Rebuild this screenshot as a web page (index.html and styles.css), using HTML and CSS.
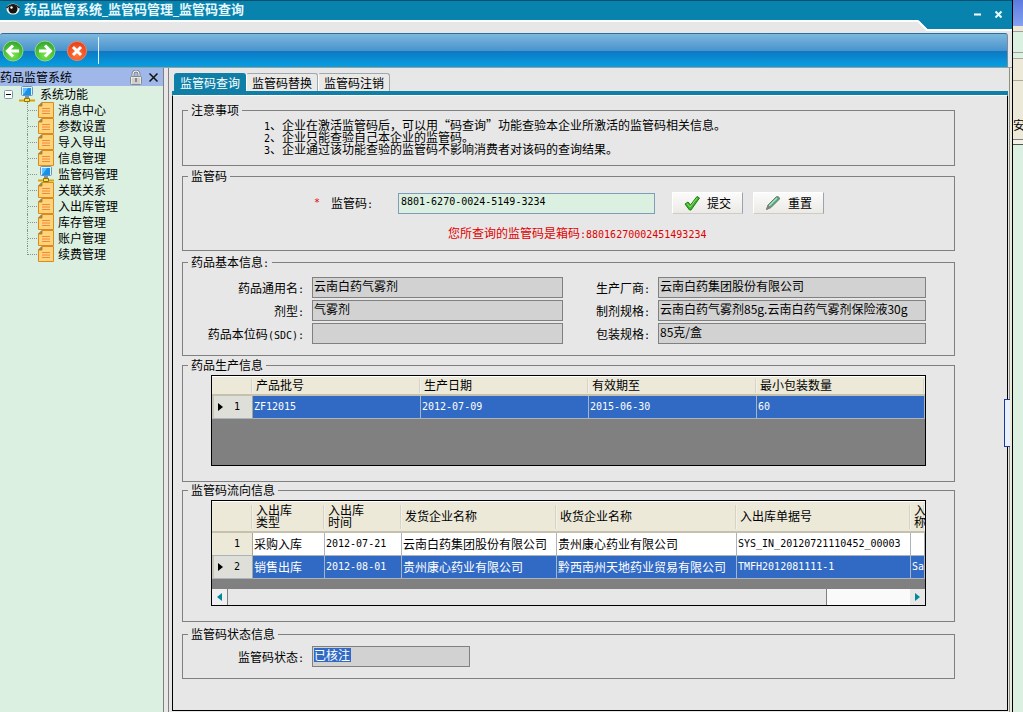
FILE: index.html
```html
<!DOCTYPE html>
<html lang="zh-CN">
<head>
<meta charset="utf-8">
<title>药品监管系统_监管码管理_监管码查询</title>
<link rel="stylesheet" href="styles.css">
</head>
<body>
<svg class="defs" aria-hidden="true">
  <defs>
    <radialGradient id="green" cx="50%" cy="70%" r="65%"><stop offset="0" stop-color="#7be84a"/><stop offset="1" stop-color="#35a632"/></radialGradient>
    <radialGradient id="orange" cx="50%" cy="70%" r="65%"><stop offset="0" stop-color="#ff7a3c"/><stop offset="1" stop-color="#e8401c"/></radialGradient>
  </defs>
  <symbol id="note" viewBox="0 0 16 16">
    <path d="M4 .5H15.500V15.500H.5V4z" fill="#ffd27c" stroke="#dc8a1e"/>
    <path d="M.5 4 4 .5V4z" fill="#9a7a2c" stroke="#b8862c"/>
    <path d="M4 6.500h8M4 9h8M4 11.500h8" stroke="#f08a34"/>
  </symbol>
  <symbol id="pc" viewBox="0 0 16 16">
    <rect x="2.500" y=".5" width="11" height="9" rx="1" fill="#e4f0fa" stroke="#6d93b8"/>
    <rect x="4" y="2" width="8" height="7" fill="#1492ea"/>
    <path d="M4 2h5L5 8H4z" fill="#5cc0ff"/>
    <path d="M6 10h4v3H6z" fill="#8b8f96"/>
    <path d="M0 14.500h16" stroke="#d9a400" stroke-width="2"/>
    <path d="M5.500 12.500h5v3h-5z" fill="#ffe14a" stroke="#8c7412"/>
  </symbol>
</svg>
<div class="window">
  <header class="titlebar">
    <div class="title-left">
      <svg class="eye" viewBox="0 0 14 12" width="14" height="12"><ellipse cx="7" cy="6" rx="6.500" ry="5.500" fill="#f4f4f4"/><circle cx="7" cy="6" r="4.500" fill="#17130f"/><circle cx="5.500" cy="4.500" r="1.200" fill="#fff"/><path d="M.5 5Q7-2 13.500 5" fill="none" stroke="#222" stroke-width="1.500"/></svg>
      <h1>药品监管系统<span class="num">_</span>监管码管理<span class="num">_</span>监管码查询</h1>
    </div>
    <svg class="notch" viewBox="0 0 10 31" width="10" height="31"><path d="M0 0H10V29H9L0 20z" fill="#0883ae"/><path d="M0 .5H10" stroke="#04516f"/><path d="M0 21 9 30H10" fill="none" stroke="#fff" stroke-width="2"/></svg>
    <div class="title-right">
      <button type="button" aria-label="最小化"><svg viewBox="0 0 9 9" width="9" height="9"><path d="M1 4.500h7" stroke="#fff" stroke-width="2"/></svg></button>
      <button type="button" aria-label="关闭"><svg viewBox="0 0 9 9" width="9" height="9"><path d="M1.500 1.500l6 6M7.500 1.500l-6 6" stroke="#e8fbff" stroke-width="2"/></svg></button>
    </div>
  </header>
  <nav class="toolbar">
    <button type="button" aria-label="后退"><svg viewBox="0 0 22 22" width="22" height="22"><circle cx="11" cy="11" r="10" fill="url(#green)" stroke="#8fdc86"/><path d="M17 11H6M11 5.500 5.500 11l5.500 5.500" fill="none" stroke="#fff" stroke-width="3"/></svg></button>
    <button type="button" aria-label="前进"><svg viewBox="0 0 22 22" width="22" height="22"><circle cx="11" cy="11" r="10" fill="url(#green)" stroke="#8fdc86"/><path d="M5 11h11M11 5.500l5.500 5.500-5.500 5.500" fill="none" stroke="#fff" stroke-width="3"/></svg></button>
    <button type="button" aria-label="停止"><svg viewBox="0 0 22 22" width="22" height="22"><circle cx="11" cy="11" r="9.500" fill="url(#orange)" stroke="#f2855e"/><path d="M7 7l8 8M15 7l-8 8" stroke="#fff" stroke-width="3"/></svg></button>
    <span class="sep"></span>
  </nav>
  <div class="body">
    <aside class="sidebar">
      <div class="side-head">
        <h2>药品监管系统</h2>
        <button type="button" aria-label="锁定"><svg viewBox="0 0 12 15" width="12" height="15"><path d="M3 7V4a3 3 0 0 1 6 0v3" fill="none" stroke="#888c94" stroke-width="3"/><path d="M3 7V4a3 3 0 0 1 6 0v3" fill="none" stroke="#f4f4f4"/><rect x=".5" y="6.500" width="11" height="8" rx="1" fill="#e9e9e6" stroke="#85888c"/><path d="M2 9h8M2 11h8M2 13h8" stroke="#b4b4b0"/><path d="M6 8v4" stroke="#444"/></svg></button>
        <button type="button" aria-label="关闭面板"><svg viewBox="0 0 9 9" width="9" height="9"><path d="M.5.5l8 8M8.500.5l-8 8" stroke="#111" stroke-width="1.500"/></svg></button>
      </div>
      <div class="tree">
        <div class="root"><svg viewBox="0 0 9 9" width="9" height="9"><rect x=".5" y=".5" width="8" height="8" rx="1" fill="#fff" stroke="#7e96ac"/><path d="M2 4.500h5" stroke="#000"/></svg><svg class="ico" width="16" height="16"><use href="#pc"/></svg><span>系统功能</span></div>
        <ul>
          <li><svg width="16" height="16"><use href="#note"/></svg>消息中心</li>
          <li><svg width="16" height="16"><use href="#note"/></svg>参数设置</li>
          <li><svg width="16" height="16"><use href="#note"/></svg>导入导出</li>
          <li><svg width="16" height="16"><use href="#note"/></svg>信息管理</li>
          <li><svg width="16" height="16"><use href="#pc"/></svg>监管码管理</li>
          <li><svg width="16" height="16"><use href="#note"/></svg>关联关系</li>
          <li><svg width="16" height="16"><use href="#note"/></svg>入出库管理</li>
          <li><svg width="16" height="16"><use href="#note"/></svg>库存管理</li>
          <li><svg width="16" height="16"><use href="#note"/></svg>账户管理</li>
          <li><svg width="16" height="16"><use href="#note"/></svg>续费管理</li>
        </ul>
      </div>
    </aside>
    <div class="splitter"></div>
    <main class="content">
      <div class="tabs">
        <button type="button" class="tab active">监管码查询</button>
        <button type="button" class="tab">监管码替换</button>
        <button type="button" class="tab">监管码注销</button>
      </div>
      <form class="panel">
        <fieldset class="group notes">
          <legend>注意事项</legend>
          <div class="inner">
            <p><span class="num">1</span>、企业在激活监管码后，可以用“码查询”功能查验本企业所激活的监管码相关信息。</p>
            <p><span class="num">2</span>、企业只能查验自己本企业的监管码。</p>
            <p><span class="num">3</span>、企业通过该功能查验的监管码不影响消费者对该码的查询结果。</p>
          </div>
        </fieldset>
        <fieldset class="group query">
          <legend>监管码</legend>
          <div class="inner">
            <div class="query-row">
              <span class="star num">*</span>
              <label for="code">监管码<span class="num">:</span></label>
              <input id="code" class="code num" type="text" value="8801-6270-0024-5149-3234">
              <button type="button" class="btn"><svg viewBox="0 0 16 16" width="16" height="16"><path d="M1 9l3-2 2.500 3L13 1.500 15.500 3 7 15H5.500z" fill="#3fb52a" stroke="#1f7a17"/><path d="M3 8.500 6 12l7-9" fill="none" stroke="#8ee06a"/></svg>提交</button>
              <button type="button" class="btn"><svg viewBox="0 0 16 16" width="16" height="16"><path d="M1.500 14.500 3 10l8-8q3-1.500 3.500 2l-8.500 8.500z" fill="#52a878" stroke="#6b7a74"/><path d="M4 11l8-8" stroke="#a8e4c0" stroke-width="1.500"/><path d="M1 15l2-5 3 2.500z" fill="#8a7c8c"/></svg>重置</button>
            </div>
            <p class="message">您所查询的监管码是箱码<span class="num">:88016270002451493234</span></p>
          </div>
        </fieldset>
        <fieldset class="group basic">
          <legend>药品基本信息<span class="num">:</span></legend>
          <div class="inner fields">
            <label for="f1">药品通用名<span class="num">:</span></label><input id="f1" type="text" readonly value="云南白药气雾剂">
            <label for="f2">生产厂商<span class="num">:</span></label><input id="f2" type="text" readonly value="云南白药集团股份有限公司">
            <label for="f3">剂型<span class="num">:</span></label><input id="f3" type="text" readonly value="气雾剂">
            <label for="f4">制剂规格<span class="num">:</span></label><input id="f4" type="text" readonly value="云南白药气雾剂85g.云南白药气雾剂保险液30g">
            <label for="f5">药品本位码<span class="num">(SDC):</span></label><input id="f5" type="text" readonly value="">
            <label for="f6">包装规格<span class="num">:</span></label><input id="f6" type="text" readonly value="85克/盒">
          </div>
        </fieldset>
        <fieldset class="group production">
          <legend>药品生产信息</legend>
          <div class="inner">
            <div class="grid">
              <table>
                <colgroup><col class="c-head"><col><col><col><col></colgroup>
                <thead><tr><th></th><th>产品批号</th><th>生产日期</th><th>有效期至</th><th>最小包装数量</th></tr></thead>
                <tbody><tr class="sel"><th><div class="rowhead"><i class="mark"></i><span class="num">1</span></div></th><td class="num">ZF12015</td><td class="num">2012-07-09</td><td class="num">2015-06-30</td><td class="num">60</td></tr></tbody>
              </table>
            </div>
          </div>
        </fieldset>
        <fieldset class="group flow">
          <legend>监管码流向信息</legend>
          <div class="inner">
            <div class="grid">
              <table class="tall">
                <colgroup><col class="c-head"><col class="c-type"><col class="c-time"><col class="c-from"><col class="c-to"><col class="c-no"><col></colgroup>
                <thead><tr><th></th><th>入出库<br>类型</th><th>入出库<br>时间</th><th>发货企业名称</th><th>收货企业名称</th><th>入出库单据号</th><th>入<br>称</th></tr></thead>
                <tbody>
                  <tr><th><div class="rowhead"><i></i><span class="num">1</span></div></th><td>采购入库</td><td class="num">2012-07-21</td><td>云南白药集团股份有限公司</td><td>贵州康心药业有限公司</td><td class="num">SYS_IN_20120721110452_00003</td><td></td></tr>
                  <tr class="sel"><th><div class="rowhead"><i class="mark"></i><span class="num">2</span></div></th><td>销售出库</td><td class="num">2012-08-01</td><td>贵州康心药业有限公司</td><td>黔西南州天地药业贸易有限公司</td><td class="num">TMFH2012081111-1</td><td class="num">Sa</td></tr>
                </tbody>
              </table>
              <div class="hscroll">
                <button type="button" aria-label="向左滚动"><svg viewBox="0 0 5 8" width="5" height="8"><path d="M5 0v8L0 4z" fill="#008a96"/></svg></button>
                <span class="thumb"></span><span class="track"></span>
                <button type="button" aria-label="向右滚动"><svg viewBox="0 0 5 8" width="5" height="8"><path d="M0 0v8l5-4z" fill="#008a96"/></svg></button>
              </div>
            </div>
          </div>
        </fieldset>
        <fieldset class="group status">
          <legend>监管码状态信息</legend>
          <div class="inner status-row"><label for="state">监管码状态<span class="num">:</span></label><input id="state" class="picked" type="text" readonly value="已核注"></div>
        </fieldset>
      </form>
    </main>
    <span class="handle"></span>
  </div>
</div>
<div class="behind">
  <span class="b-title"></span><span class="b-gap"></span><span class="b-green"></span><span class="b-menu"></span><span class="b-tool">安</span><span class="b-line"></span><span class="b-rest"></span>
</div>
</body>
</html>
```
FILE: styles.css
```css
* { box-sizing: border-box; }
body {
  margin: 0; min-height: 100vh; display: flex; overflow: hidden;
  background: #e7e7e7; color: #000;
  font: 12px/14px "Noto Sans CJK SC", sans-serif;
}
h1, h2, p, ul { margin: 0; padding: 0; font-size: 12px; font-weight: normal; }
button, input { font: inherit; color: inherit; margin: 0; padding: 0; border: 0; background: none; border-radius: 0; }
button { display: flex; align-items: center; justify-content: center; }
svg { display: block; flex: none; }
.defs { position: absolute; width: 0; height: 0; }
.num { font-family: "DejaVu Sans Mono", "Noto Sans CJK SC", monospace; font-size: 10px; }
p .num, label .num, legend .num, h1 .num { line-height: 0; }

.window { flex: 1; min-width: 0; display: flex; flex-direction: column; border-right: 1px solid #000; }

.titlebar { display: flex; align-items: flex-start; height: 33px; flex: none; }
.title-left { flex: 1; display: flex; align-items: center; gap: 4px; height: 22px; padding: 0 0 3px 6px; background: #0883ae; border-top: 1px solid #04516f; border-bottom: 2px solid #fff; }
.title-left h1 { font-size: 13px; line-height: 16px; font-weight: bold; color: #e6f8ff; }
.title-right { width: 84px; height: 31px; display: flex; justify-content: flex-end; align-items: center; gap: 12px; padding: 0 9px 2px 0; background: #0883ae; border-top: 1px solid #04516f; border-bottom: 2px solid #fff; }

.toolbar { height: 34px; flex: none; margin-right: 4px; display: flex; align-items: center; gap: 10px; padding-left: 2px; border-top: 1px solid #2a6f9f; border-right: 1px solid #7c8c98; border-top-left-radius: 3px; border-top-right-radius: 3px; background: linear-gradient(#7db8de 0, #4a94cd 50%, #0d78c2 51%, #069fe2 100%); }
.sep { width: 1px; height: 27px; background: #e4f4fe; }

.body { flex: 1; min-height: 0; display: flex; position: relative; padding-right: 2px; border-top: 1px solid #a09e96; background: #ece9d8; }
.sidebar { width: 164px; flex: none; display: flex; flex-direction: column; background: #dbf0e0; border-right: 1px solid #808080; }
.side-head { height: 18px; display: flex; align-items: center; padding-right: 5px; background: #9fb8e9; }
.side-head h2 { flex: 1; }
.side-head button + button { margin-left: 7px; }
.root { display: flex; align-items: center; height: 16px; padding-left: 4px; }
.root .ico { margin: 0 5px 0 6px; }
.tree ul { list-style: none; margin-left: 27px; }
.tree li { display: flex; align-items: center; gap: 4px; height: 16px; position: relative; padding-left: 11px; }
.tree li::before { content: ""; position: absolute; left: 0; top: 0; width: 10px; height: 16px; border-left: 1px dotted #88958c; background: linear-gradient(90deg, #88958c 50%, transparent 50%) 0 8px / 2px 1px repeat-x; }
.tree li:last-child::before { height: 9px; }

.splitter { width: 5px; flex: none; background: #e7e7e7; border-right: 1px solid #808080; }
.content { flex: 1; min-width: 0; display: flex; flex-direction: column; padding: 5px 1px 1px 3px; background: #e7e7e7; border-right: 1px solid #908e88; }
.tabs { display: flex; align-items: flex-end; padding-left: 2px; border-bottom: 4px solid #0f7fa8; height: 22px; flex: none; }
.tab { height: 18px; width: 72px; border: 1px solid #a0a8ae; border-bottom: 0; border-left-color: #fff; border-radius: 3px 3px 0 0; background: #e9e9e7; white-space: nowrap; }
.tab.active { background: #0f7fa8; border-color: #0f7fa8; color: #fff; }

.panel { flex: 1; padding: 7px 52px 0 9px; border: 1px solid #000; border-top-color: #fff; }
.group { margin: 0; min-width: 0; padding: 0; border: 1px solid #808080; }
.group legend { margin-left: 5px; padding: 0 3px; height: 14px; }
.notes .inner { padding: 2px 0 10px 81px; }
.notes p { line-height: 12px; }
.query { margin-top: 3px; }
.query .inner { padding: 9px 0 10px 131px; }
.query-row { display: flex; align-items: center; }
.star { width: 17px; color: #e00000; }
.query-row label { width: 67px; }
.code { width: 257px; height: 21px; padding: 0 2px 3px; background: #dbf0e0; border: 1px solid #7f9db9; }
.btn { width: 71px; height: 22px; margin-left: 10px; gap: 7px; background: linear-gradient(#fbfbfb, #eceae6); border: 1px solid; border-color: #fff #9aa4b0 #d0ccc4 #fff; white-space: nowrap; }
.code + .btn { margin-left: 17px; }
.message { margin: 12px 0 0 134px; color: #e00000; }
.basic { margin-top: 4px; }
.basic .inner { padding: 8px 28px 11px 0; }
.fields { display: grid; grid-template-columns: 121px minmax(0, 251fr) 79px minmax(0, 268fr); gap: 2px 8px; align-items: center; }
.fields label, .status-row label { text-align: right; }
.fields input, .status-row input { width: 100%; height: 21px; padding: 0 1px 4px; background: #d2d2d2; border: 1px solid #808080; }

.production { margin-top: 2px; }
.flow { margin-top: 1px; }
.production .inner, .flow .inner { padding: 3px 28px 15px; }
.production .grid { min-height: 91px; }
.grid { background: #808080; border: 1px solid #000; overflow: hidden; }
table { width: 100%; table-layout: fixed; border-collapse: separate; border-spacing: 0; background: #fff; }
th, td { padding: 0; text-align: left; font-weight: normal; white-space: nowrap; overflow: hidden; }
.c-head { width: 41px; } .c-type { width: 72px; } .c-time { width: 77px; } .c-from { width: 155px; } .c-to { width: 180px; } .c-no { width: 174px; }
thead th { height: 20px; padding: 0 0 2px 3px; line-height: 12px; background: linear-gradient(90deg, #c9c5b2, #fff) 100% 50% / 2px 14px no-repeat, #ece9d8; border-top: 1px solid #fff; border-bottom: 2px solid #c5c1ae; }
.tall thead th { height: 32px; background-size: 2px 24px, auto; }
tbody td, tbody th { height: 23px; border-bottom: 1px solid #a9b4bd; }
tbody td { padding-left: 1px; border-right: 1px solid #a9b4bd; }
tbody th { background: #ece9d8; border-right: 1px solid #a9a594; }
.rowhead { display: flex; align-items: center; padding-left: 6px; }
.rowhead i { width: 16px; }
.rowhead .mark::before { content: ""; display: block; width: 0; border: 4px solid transparent; border-left: 5px solid #000; border-right: 0; }
.sel { background: #316ac5; color: #fff; }
.sel th { background: #dedfd8; color: #000; border-left: 2px solid #c9c6b8; }
.sel .rowhead { padding-left: 4px; }
.hscroll { display: flex; height: 16px; margin-top: 10px; background: #fafafa; }
.hscroll button { width: 16px; background: #f0f0f0; border-right: 1px solid #808080; }
.hscroll button:last-child { width: 15px; border: 0; background: #e7e7e7; }
.thumb { flex: 599; background: #e7e7e7; border-right: 1px solid #808080; }
.track { flex: 83; }
.status { margin-top: 5px; }
.status .inner { padding: 5px 0 11px; }
.status-row { display: flex; align-items: center; gap: 8px; }
.status-row label { width: 121px; }
.status-row input { width: 158px; }
.status-row .picked { color: #fff; background: linear-gradient(#316ac5, #316ac5) 1px 1px / 37px 14px no-repeat, #d2d2d2; }
.handle { position: absolute; right: 2px; top: 331px; width: 6px; height: 48px; background: #eaf0ff; border: 1px solid #1a3c96; border-right: 0; }

.behind { width: 10px; flex: none; display: flex; flex-direction: column; overflow: hidden; background: #dbf0e0; }
.b-title { height: 26px; background: linear-gradient(#5c7be0, #84a0f0); }
.b-gap { height: 5px; background: #ece9d8; }
.b-green { height: 22px; background: #dbf0e0; border-top: 1px solid #a0a096; border-bottom: 1px solid #a0a096; }
.b-menu { height: 23px; margin-top: 5px; background: #ece9d8; border-top: 1px solid #aca899; border-bottom: 1px solid #aca899; }
.b-tool { height: 59px; padding-top: 37px; background: #ece9d8; border-bottom: 1px solid #808080; }
.b-line { height: 5px; background: #f4f2e8; border-bottom: 1px solid #555; }
.b-rest { flex: 1; }
```
